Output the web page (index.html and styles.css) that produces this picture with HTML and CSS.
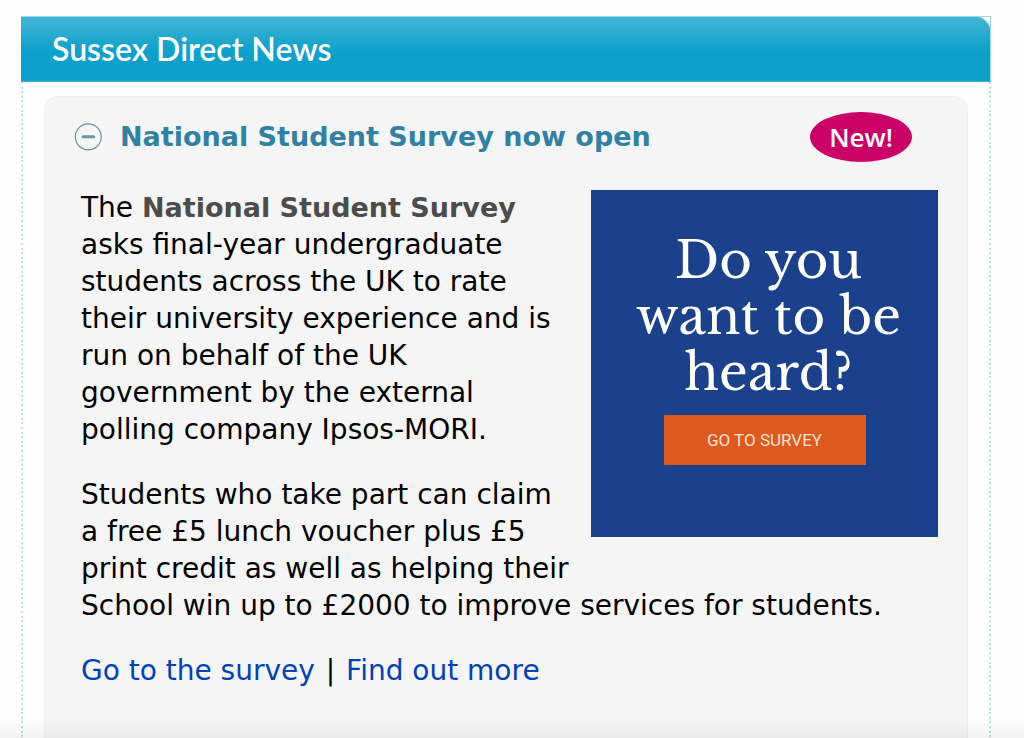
FILE: index.html
```html
<!DOCTYPE html>
<html lang="en">
<head>
<meta charset="utf-8">
<meta name="viewport" content="width=device-width, initial-scale=1">
<title>Sussex Direct News</title>
<link rel="stylesheet" href="styles.css">
</head>
<body>
<main class="page">
  <section class="news">
    <header class="news-header"><h1 class="news-title">Sussex Direct News</h1></header>
    <div class="news-body">
      <article class="story">
        <div class="story-head">
          <button class="toggle" type="button" aria-expanded="true" aria-label="Collapse story">
            <svg class="toggle-icon" viewBox="0 0 28 28" aria-hidden="true">
              <circle cx="14.3" cy="13.8" r="13" fill="none" stroke="#6f919f" stroke-width="1.2"/>
              <path d="M9 13.7H19.6" stroke="#6795a4" stroke-width="3" stroke-linecap="round"/>
            </svg>
          </button>
          <h2 class="story-title">National Student Survey now open</h2>
          <span class="badge">New!</span>
        </div>
        <div class="story-text">
          <aside class="promo">
            <p class="promo-title">Do you<br>want to be<br>heard?</p>
            <a class="promo-link" href="#survey">GO TO SURVEY</a>
          </aside>
          <p class="copy">The <strong class="strong">National Student Survey</strong> asks final-year undergraduate students across the UK to rate their university experience and is run on behalf of the UK government by the external polling company Ipsos-MORI.</p>
          <p class="copy">Students who take part can claim a free £5 lunch voucher plus £5 print credit as well as helping their School win up to £2000 to improve services for students.</p>
          <p class="copy"><a class="link" href="#survey">Go to the survey</a> <span class="divider">|</span> <a class="link" href="#more">Find out more</a></p>
        </div>
      </article>
    </div>
  </section>
</main>
</body>
</html>
```
FILE: styles.css
```css
* { box-sizing: border-box; }

body {
  margin: 0;
  background: #fefefe;
  color: #000;
  font-family: Verdana, "DejaVu Sans", sans-serif;
  font-size: 28px;
  line-height: 37px;
}

h1, h2, p { margin: 0; }

.page {
  position: relative;
  display: flex;
  min-height: 100vh;
  padding: 16px 33px 0 21px;
}

/* Soft shade along the bottom edge */
.page::after {
  content: "";
  position: absolute;
  inset: auto 0 0;
  height: 32px;
  background: linear-gradient(rgba(0, 0, 0, 0), rgba(0, 0, 0, 0.07));
  pointer-events: none;
}

.news {
  display: flex;
  flex: 1;
  flex-direction: column;
}

.news-header {
  padding: 15px 31px;
  border: 1px solid;
  border-width: 1px 1px 1px 0;
  border-color: #9bd9ea #9bd9ea #3bb0d2;
  background:
    radial-gradient(circle at 0 100%, transparent 16px, #fefefe 18px) top right / 16px 16px no-repeat,
    linear-gradient(#43b4d4, #0ca0cb 55%, #0ca0cb);
}

.news-title {
  color: #fff;
  font: 600 32px/34px "Trebuchet MS", Lato, sans-serif;
}

.news-body {
  --dots: linear-gradient(#b9e0e3 0 2px, transparent 2px 5px, #b9e0e3 5px 7px, transparent 7px 9px, #b9e0e3 9px 11px, transparent 11px 14px, #b9e0e3 14px 16px, transparent 16px 18px, #b9e0e3 18px 20px, transparent 20px);
  display: flex;
  flex: 1;
  padding: 14px 23px 0;
  background: var(--dots) left top / 2px 23px repeat-y, var(--dots) right top / 2px 23px repeat-y;
}

.story {
  flex: 1;
  padding: 15px 29px 32px;
  border: 1px solid #efefef;
  border-bottom: 0;
  border-radius: 14px 14px 0 0;
  background: #f5f5f5;
}

.story-head {
  display: flex;
  align-items: center;
  padding-right: 26px;
}

.toggle {
  width: 28px;
  height: 28px;
  padding: 0;
  border: 0;
  background: none;
}

.toggle-icon { display: block; }

.story-title {
  flex: 1;
  margin-left: 18px;
  color: #3182a2;
  font-size: 27px;
  line-height: 36px;
}

.badge {
  width: 102px;
  border-radius: 50%;
  background: #cb0067;
  color: #fff;
  font: 600 26px/50px "Open Sans", sans-serif;
  text-align: center;
}

.story-text { padding: 27px 0 0 7px; }

.promo {
  float: right;
  width: 347px;
  height: 347px;
  margin: 1px 0 20px 20px;
  padding-top: 43px;
  background: #1c418c;
  color: #fff;
  text-align: center;
}

.promo-title {
  padding-left: 8px;
  font: 50px/56px "Libre Baskerville", Baskerville, "Liberation Serif", serif;
}

.promo-link {
  display: block;
  width: 202px;
  margin: 14px auto 0;
  background: #dd591d;
  color: #f9e3d9;
  font: 17px/50px Roboto, sans-serif;
  text-decoration: none;
}

.copy { margin-bottom: 28px; }

.strong {
  color: #4c4c4c;
  font-size: 27px;
}

.link {
  color: #0041bb;
  text-decoration: none;
}

.divider { margin: 0 2px; }
```
